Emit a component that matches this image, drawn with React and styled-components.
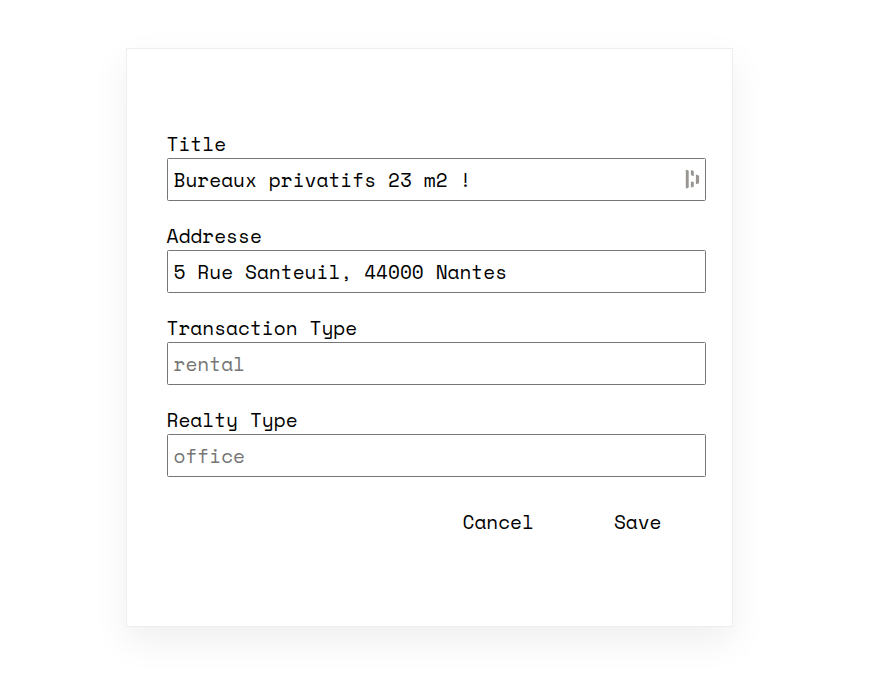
import React from "react";
import styled, { createGlobalStyle } from "styled-components";

const GlobalStyle = createGlobalStyle`
  * { box-sizing: border-box; }
  body {
    margin: 0;
    background: #fff;
    color: #000;
    font-family: "Space Mono", "DejaVu Sans Mono", monospace;
  }
`;

const Page = styled.main`
  height: 692px;
  padding: 48px 0 0 126px;
  overflow: hidden;
`;

const Card = styled.form`
  display: flex;
  flex-direction: column;
  width: 607px;
  height: 579px;
  padding: 82px 26px 0 40px;
  border: 1px solid #eee;
  background: #fff;
  box-shadow: 0 14px 35px rgba(0, 0, 0, 0.065);
`;

const Field = styled.label`
  display: block;
  height: 92px;
  font-size: 19.48px;
  line-height: 27px;
`;

const Caption = styled.span`
  display: block;
  height: 27px;
  line-height: 25px;
  text-indent: -0.5px;
`;

const InputRow = styled.span`
  display: flex;
  align-items: center;
  height: 43px;
  padding: 0 5px 0 5.5px;
  border: 1px solid #767676;
  border-radius: 1.5px;
`;

const Input = styled.input`
  flex: 1;
  min-width: 0;
  height: 41px;
  padding: 0;
  border: 0;
  outline: 0;
  background: transparent;
  color: #000;
  font: inherit;
  &::placeholder { color: #757575; opacity: 1; }
`;

const Actions = styled.div`
  display: flex;
  justify-content: flex-end;
  gap: 80px;
  padding: 9px 44.5px 0 0;
`;

const Button = styled.button`
  padding: 0;
  border: 0;
  background: none;
  color: #000;
  font: inherit;
  font-size: 19.45px;
  line-height: 27px;
`;

const Icon = styled.svg`
  width: 15px;
  height: 21px;
  flex: none;
`;

const fields = [
  { caption: "Title", value: "Bureaux privatifs 23 m2 !", icon: true },
  { caption: "Addresse", value: "5 Rue Santeuil, 44000 Nantes" },
  { caption: "Transaction Type", placeholder: "rental" },
  { caption: "Realty Type", placeholder: "office" },
];

export default function App() {
  return (
    <Page>
      <GlobalStyle />
      <Card>
        {fields.map((f) => (
          <Field key={f.caption}>
            <Caption>{f.caption}</Caption>
            <InputRow>
              <Input type="text" defaultValue={f.value} placeholder={f.placeholder} />
              {f.icon && (
                <Icon viewBox="0 0 15 21" fill="#999691" aria-hidden="true">
                  <path d="M.8.8l2.2.5q.7.2.7.9v15.8q0 .7-.7.9L.8 19.4zM5.9 1l2.2.7q.7.2.7.9v4.6l-2.2-.7q-.7-.2-.7-.9zM5.9 13.3q0-.7.7-.7l2.2.3v4.1q0 .7-.7.9l-2.2.7zM10.9 5.4l2.4.8q.8.3.8 1v6.3q0 .8-.8 1l-2.4.8z" />
                </Icon>
              )}
            </InputRow>
          </Field>
        ))}
        <Actions>
          <Button type="button">Cancel</Button>
          <Button type="button">Save</Button>
        </Actions>
      </Card>
    </Page>
  );
}
